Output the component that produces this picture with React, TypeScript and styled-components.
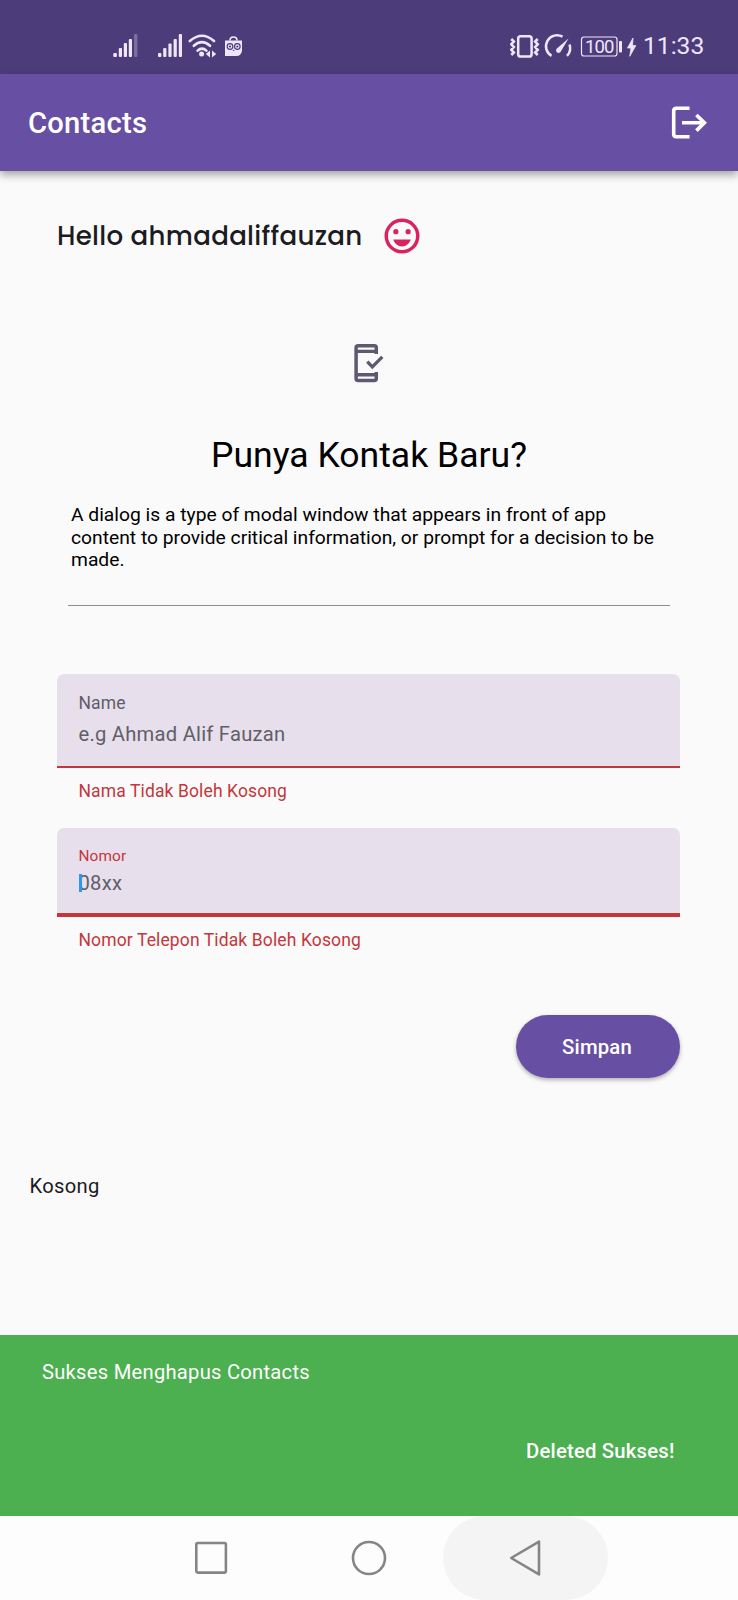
import React from "react";
import styled, { createGlobalStyle } from "styled-components";

const Global = createGlobalStyle`
  *, *::before, *::after { box-sizing: border-box; }
  html, body { margin: 0; padding: 0; background: #fafafa; }
  body { font-family: Roboto, "Liberation Sans", sans-serif; color: #1c1b1f; }
  svg { display: block; flex: none; }
`;

const Screen = styled.div`
  width: 738px;
  height: 1600px;
  display: flex;
  flex-direction: column;
  background: #fafafa;
  overflow: hidden;
`;

const StatusBar = styled.header`
  height: 74px;
  flex: none;
  padding: 17px 33px 0 113px;
  display: flex;
  align-items: center;
  justify-content: space-between;
  background: #4d3c7a;
  color: #efe6fb;
`;

const StatusGroup = styled.div`
  display: flex;
  align-items: center;
`;

const Clock = styled.span`
  margin-left: 6px;
  width: 62px;
  font-size: 24.6px;
  line-height: 30px;
  white-space: nowrap;
`;

const AppBar = styled.nav`
  height: 97px;
  flex: none;
  padding: 0 31px 0 28px;
  display: flex;
  align-items: center;
  justify-content: space-between;
  background: #6750a3;
  color: #fff;
  box-shadow: 0 4px 8px rgba(0, 0, 0, 0.34);
  z-index: 1;
`;

const AppTitle = styled.h1`
  margin: 0;
  padding-top: 1px;
  font-size: 29.2px;
  font-weight: 500;
  line-height: 34px;
  letter-spacing: 0.25px;
`;

const Content = styled.main`
  flex: 1;
  padding: 43.5px 57px 0;
  display: flex;
  flex-direction: column;
`;

const Greeting = styled.div`
  display: flex;
  align-items: center;
  gap: 19px;
  height: 42px;
`;

const GreetingText = styled.span`
  width: 305px;
  font-family: Poppins, Inter, sans-serif;
  font-size: 26.1px;
  font-weight: 500;
  font-feature-settings: "cv11", "ss03";
  line-height: 36px;
  letter-spacing: 0.3px;
  white-space: nowrap;
`;

const Intro = styled.section`
  display: flex;
  flex-direction: column;
  align-items: center;
  margin-top: 86px;
`;

const Headline = styled.h2`
  margin: 50px 0 0;
  font-size: 35.6px;
  font-weight: 400;
  line-height: 44px;
  color: #000;
`;

const Description = styled.p`
  margin: 27.5px 0 0;
  width: 596px;
  font-size: 19.25px;
  line-height: 22.5px;
  color: #000;
`;

const Divider = styled.hr`
  margin: 33px 0 0;
  width: 602px;
  height: 1px;
  border: 0;
  background: #8f8d96;
`;

const Form = styled.form`
  margin-top: 68px;
  display: flex;
  flex-direction: column;
`;

const Field = styled.div<{ $active?: boolean }>`
  width: 623px;
  height: ${(p) => (p.$active ? 89.5 : 94)}px;
  padding: ${(p) => (p.$active ? 16 : 17)}px 21.5px 0;
  border-radius: 7px 7px 0 0;
  background: #e7dfec;
  border-bottom: ${(p) => (p.$active ? "4px" : "2px")} solid #c3373c;
  display: flex;
  flex-direction: column;
`;

const Label = styled.label<{ $active?: boolean }>`
  font-size: ${(p) => (p.$active ? 15.4 : 17.5)}px;
  line-height: 24px;
  letter-spacing: 0.1px;
  color: ${(p) => (p.$active ? "#c3373c" : "#625c6a")};
`;

const Placeholder = styled.div<{ $active?: boolean }>`
  display: flex;
  align-items: center;
  position: relative;
  margin-top: ${(p) => (p.$active ? 2 : 6)}px;
  font-size: 20.2px;
  line-height: 26px;
  letter-spacing: 0.24px;
  color: #625e68;
`;

const Caret = styled.i`
  position: absolute;
  left: 0;
  top: 4px;
  width: 3.5px;
  height: 18px;
  background: #2f97ea;
`;

const ErrorText = styled.p`
  margin: 12px 0 0 21.5px;
  font-size: 17.5px;
  line-height: 22px;
  letter-spacing: 0.12px;
  color: #c3373c;
`;

const FieldGroup = styled.div<{ $gap?: boolean }>`
  margin-top: ${(p) => (p.$gap ? 26 : 0)}px;
`;

const SaveButton = styled.button`
  align-self: flex-end;
  margin: 64px 1px 0 0;
  padding: 0 2px 0 0;
  width: 164px;
  height: 63px;
  border: 0;
  border-radius: 32px;
  background: #6750a3;
  color: #fff;
  font: 500 20.3px/24px Roboto, sans-serif;
  letter-spacing: 0.2px;
  box-shadow: 0 2px 4px rgba(0, 0, 0, 0.3);
`;

const EmptyText = styled.p`
  margin: 94.5px 0 0 -27.5px;
  font-size: 20.2px;
  line-height: 26px;
  letter-spacing: 0.3px;
`;

const Snackbar = styled.aside`
  height: 181px;
  flex: none;
  padding: 24px 63.5px 0 42px;
  display: flex;
  flex-direction: column;
  background: #4caf50;
  color: #fff;
`;

const SnackMessage = styled.span`
  font-size: 20.2px;
  line-height: 26px;
  letter-spacing: 0.25px;
`;

const SnackAction = styled.strong`
  align-self: flex-end;
  margin-top: 53px;
  font-size: 20.3px;
  font-weight: 500;
  line-height: 26px;
  letter-spacing: 0.2px;
`;

const NavBar = styled.footer`
  height: 84px;
  flex: none;
  padding-left: 128px;
  display: flex;
  background: #fdfdfd;
`;

const NavKey = styled.div<{ $width: number; $pressed?: boolean }>`
  width: ${(p) => p.$width}px;
  height: 84px;
  display: flex;
  align-items: center;
  justify-content: center;
  border-radius: 42px;
  background: ${(p) => (p.$pressed ? "#f4f4f4" : "transparent")};
`;

const Signals = () => (
  <svg width="130" height="26" viewBox="113 32 130 26" fill="currentColor">
    <g>
      <rect x="113.3" y="52" width="3.6" height="4" rx="1" />
      <rect x="118.8" y="47" width="3.2" height="9" rx="1" />
      <rect x="123.8" y="42" width="3.2" height="14" rx="1" />
      <rect x="128.8" y="38" width="3.2" height="18" rx="1" />
      <rect x="134" y="33" width="3.4" height="23" rx="1" opacity=".3" />
    </g>
    <g>
      <rect x="158" y="52" width="3.4" height="4" rx="1" />
      <rect x="163.2" y="47" width="3.2" height="9" rx="1" />
      <rect x="168.4" y="42.5" width="3.2" height="13.5" rx="1" />
      <rect x="173.6" y="38" width="3.2" height="18" rx="1" />
      <rect x="178.8" y="33" width="3.2" height="23" rx="1" />
    </g>
    <g fill="none" stroke="currentColor" strokeWidth="2.6" strokeLinecap="round">
      <path d="M189.8 40Q202 29.5 214 40" />
      <path d="M193.8 44.8Q202 37.5 210 44.8" />
      <path d="M197.6 49.6Q202 45.6 206.4 49.6" />
    </g>
    <circle cx="201.6" cy="53" r="2.5" />
    <path d="M210 49.5v7l-4.2-3.5zM212 49.5v7l4.2-3.5z" />
    <path d="M225 39.500h17V50q-1 5-5.500 5h-11.500z" />
    <path d="M230 39.500q0-3.500 3.500-3.500t3.500 3.500" fill="none" stroke="currentColor" strokeWidth="1.600" />
    <g fill="#efe6fb" stroke="#4d3c7a" strokeWidth="1.2">
      <circle cx="230" cy="45.500" r="2.800" />
      <circle cx="237.300" cy="45.500" r="2.800" />
    </g>
    <circle cx="230" cy="45.500" r="1.100" fill="#4d3c7a" />
    <circle cx="237.300" cy="45.500" r="1.100" fill="#4d3c7a" />
    <path d="M232.400 49.800l1.200-1.400 1.200 1.400z" fill="#4d3c7a" />
  </svg>
);

const SystemIcons = () => (
  <svg width="127" height="26" viewBox="510 32 127 26" fill="none" stroke="currentColor">
    <rect x="518.2" y="35.2" width="13.4" height="20.4" rx="2.4" strokeWidth="2.5" />
    <path d="M511.300 38l2.500 2.500-2.500 2.800 2.500 2.700-2.500 2.800 2.500 2.700-2.500 2.500M537.700 38l-2.500 2.500 2.500 2.800-2.500 2.700 2.500 2.800-2.500 2.700 2.500 2.500" strokeWidth="2.600" />
    <path d="M551.5 54.8A11 11 0 0 1 562.5 35.7M569.5 43.5A11 11 0 0 1 567 54.8" strokeWidth="2.5" />
    <path d="M557.2 47.3L568.5 37.5 560.8 50.5A2.5 2.5 0 1 1 557.2 47.3z" fill="currentColor" stroke="none" />
    <rect x="581.5" y="36" width="35.5" height="19" rx="2.5" strokeWidth="1.2" />
    <rect x="619" y="40" width="3" height="11.5" rx="1" fill="currentColor" stroke="none" />
    <path d="M633 37l-5.500 10h3.500l-1.200 8.300 6-10.700h-3.300z" fill="currentColor" strokeWidth=".8" />
    <text x="585" y="52" fontSize="18.500" textLength="29.500" fontFamily="Roboto, sans-serif" fill="currentColor" stroke="none">100</text>
  </svg>
);

const LogoutIcon = () => (
  <svg width="36" height="34" viewBox="671 106 36 34" fill="none" stroke="#fff" strokeWidth="3.6">
    <path d="M689.5 108.2h-13q-2.8 0-2.8 2.8v23q0 2.8 2.8 2.8h13" />
    <path d="M682 122.8h21M696.4 115l8 7.8-8 7.8" />
  </svg>
);

const SmileIcon = () => (
  <svg width="42" height="42" viewBox="0 0 24 24" fill="#d9225f">
    <path d="M12 2a10 10 0 1 0 0 20 10 10 0 0 0 0-20zm0 18a8 8 0 1 1 0-16 8 8 0 0 1 0 16z" />
    <circle cx="8.5" cy="9.5" r="1.5" />
    <circle cx="15.5" cy="9.5" r="1.5" />
    <path d="M7 14c.7 2.3 2.7 4 5 4s4.3-1.7 5-4z" />
  </svg>
);

const VerifiedPhoneIcon = () => (
  <svg width="30" height="40" viewBox="354 343 30 40" fill="none" stroke="#5f5871" strokeWidth="3.5">
    <path d="M376.300 354v-6.200q0-2-2-2h-16.200q-2 0-2 2v30.600q0 2 2 2h16.200q2 0 2-2v-6.400" />
    <path d="M356 351.400h20.300M356 374.800h20.300" strokeWidth="3.400" />
    <path d="M367.300 361.600l5 5.200 10-10" strokeWidth="3.300" />
  </svg>
);

export default function App() {
  return (
    <>
      <Global />
      <Screen>
        <StatusBar>
          <StatusGroup><Signals /></StatusGroup>
          <StatusGroup><SystemIcons /><Clock>11:33</Clock></StatusGroup>
        </StatusBar>
        <AppBar>
          <AppTitle>Contacts</AppTitle>
          <LogoutIcon />
        </AppBar>
        <Content>
          <Greeting>
            <GreetingText>Hello ahmadaliffauzan</GreetingText>
            <SmileIcon />
          </Greeting>
          <Intro>
            <VerifiedPhoneIcon />
            <Headline>Punya Kontak Baru?</Headline>
            <Description>
              A dialog is a type of modal window that appears in front of app content to provide
              critical information, or prompt for a decision to be made.
            </Description>
            <Divider />
          </Intro>
          <Form>
            <FieldGroup>
              <Field>
                <Label>Name</Label>
                <Placeholder>e.g Ahmad Alif Fauzan</Placeholder>
              </Field>
              <ErrorText>Nama Tidak Boleh Kosong</ErrorText>
            </FieldGroup>
            <FieldGroup $gap>
              <Field $active>
                <Label $active>Nomor</Label>
                <Placeholder $active>08xx<Caret /></Placeholder>
              </Field>
              <ErrorText>Nomor Telepon Tidak Boleh Kosong</ErrorText>
            </FieldGroup>
            <SaveButton type="button">Simpan</SaveButton>
          </Form>
          <EmptyText>Kosong</EmptyText>
        </Content>
        <Snackbar>
          <SnackMessage>Sukses Menghapus Contacts</SnackMessage>
          <SnackAction>Deleted Sukses!</SnackAction>
        </Snackbar>
        <NavBar>
          <NavKey $width={166}>
            <svg width="34" height="34" fill="none" stroke="#858585" strokeWidth="2.6">
              <rect x="2.3" y="2" width="29.6" height="29.6" rx="1.5" />
            </svg>
          </NavKey>
          <NavKey $width={149}>
            <svg width="36" height="36" fill="none" stroke="#858585" strokeWidth="2.6">
              <circle cx="18" cy="18" r="16" />
            </svg>
          </NavKey>
          <NavKey $width={165} $pressed>
            <svg width="34" height="38" fill="none" stroke="#858585" strokeWidth="2.6" strokeLinejoin="round">
              <path d="M30 2.600v32.800L2.200 19z" />
            </svg>
          </NavKey>
        </NavBar>
      </Screen>
    </>
  );
}
